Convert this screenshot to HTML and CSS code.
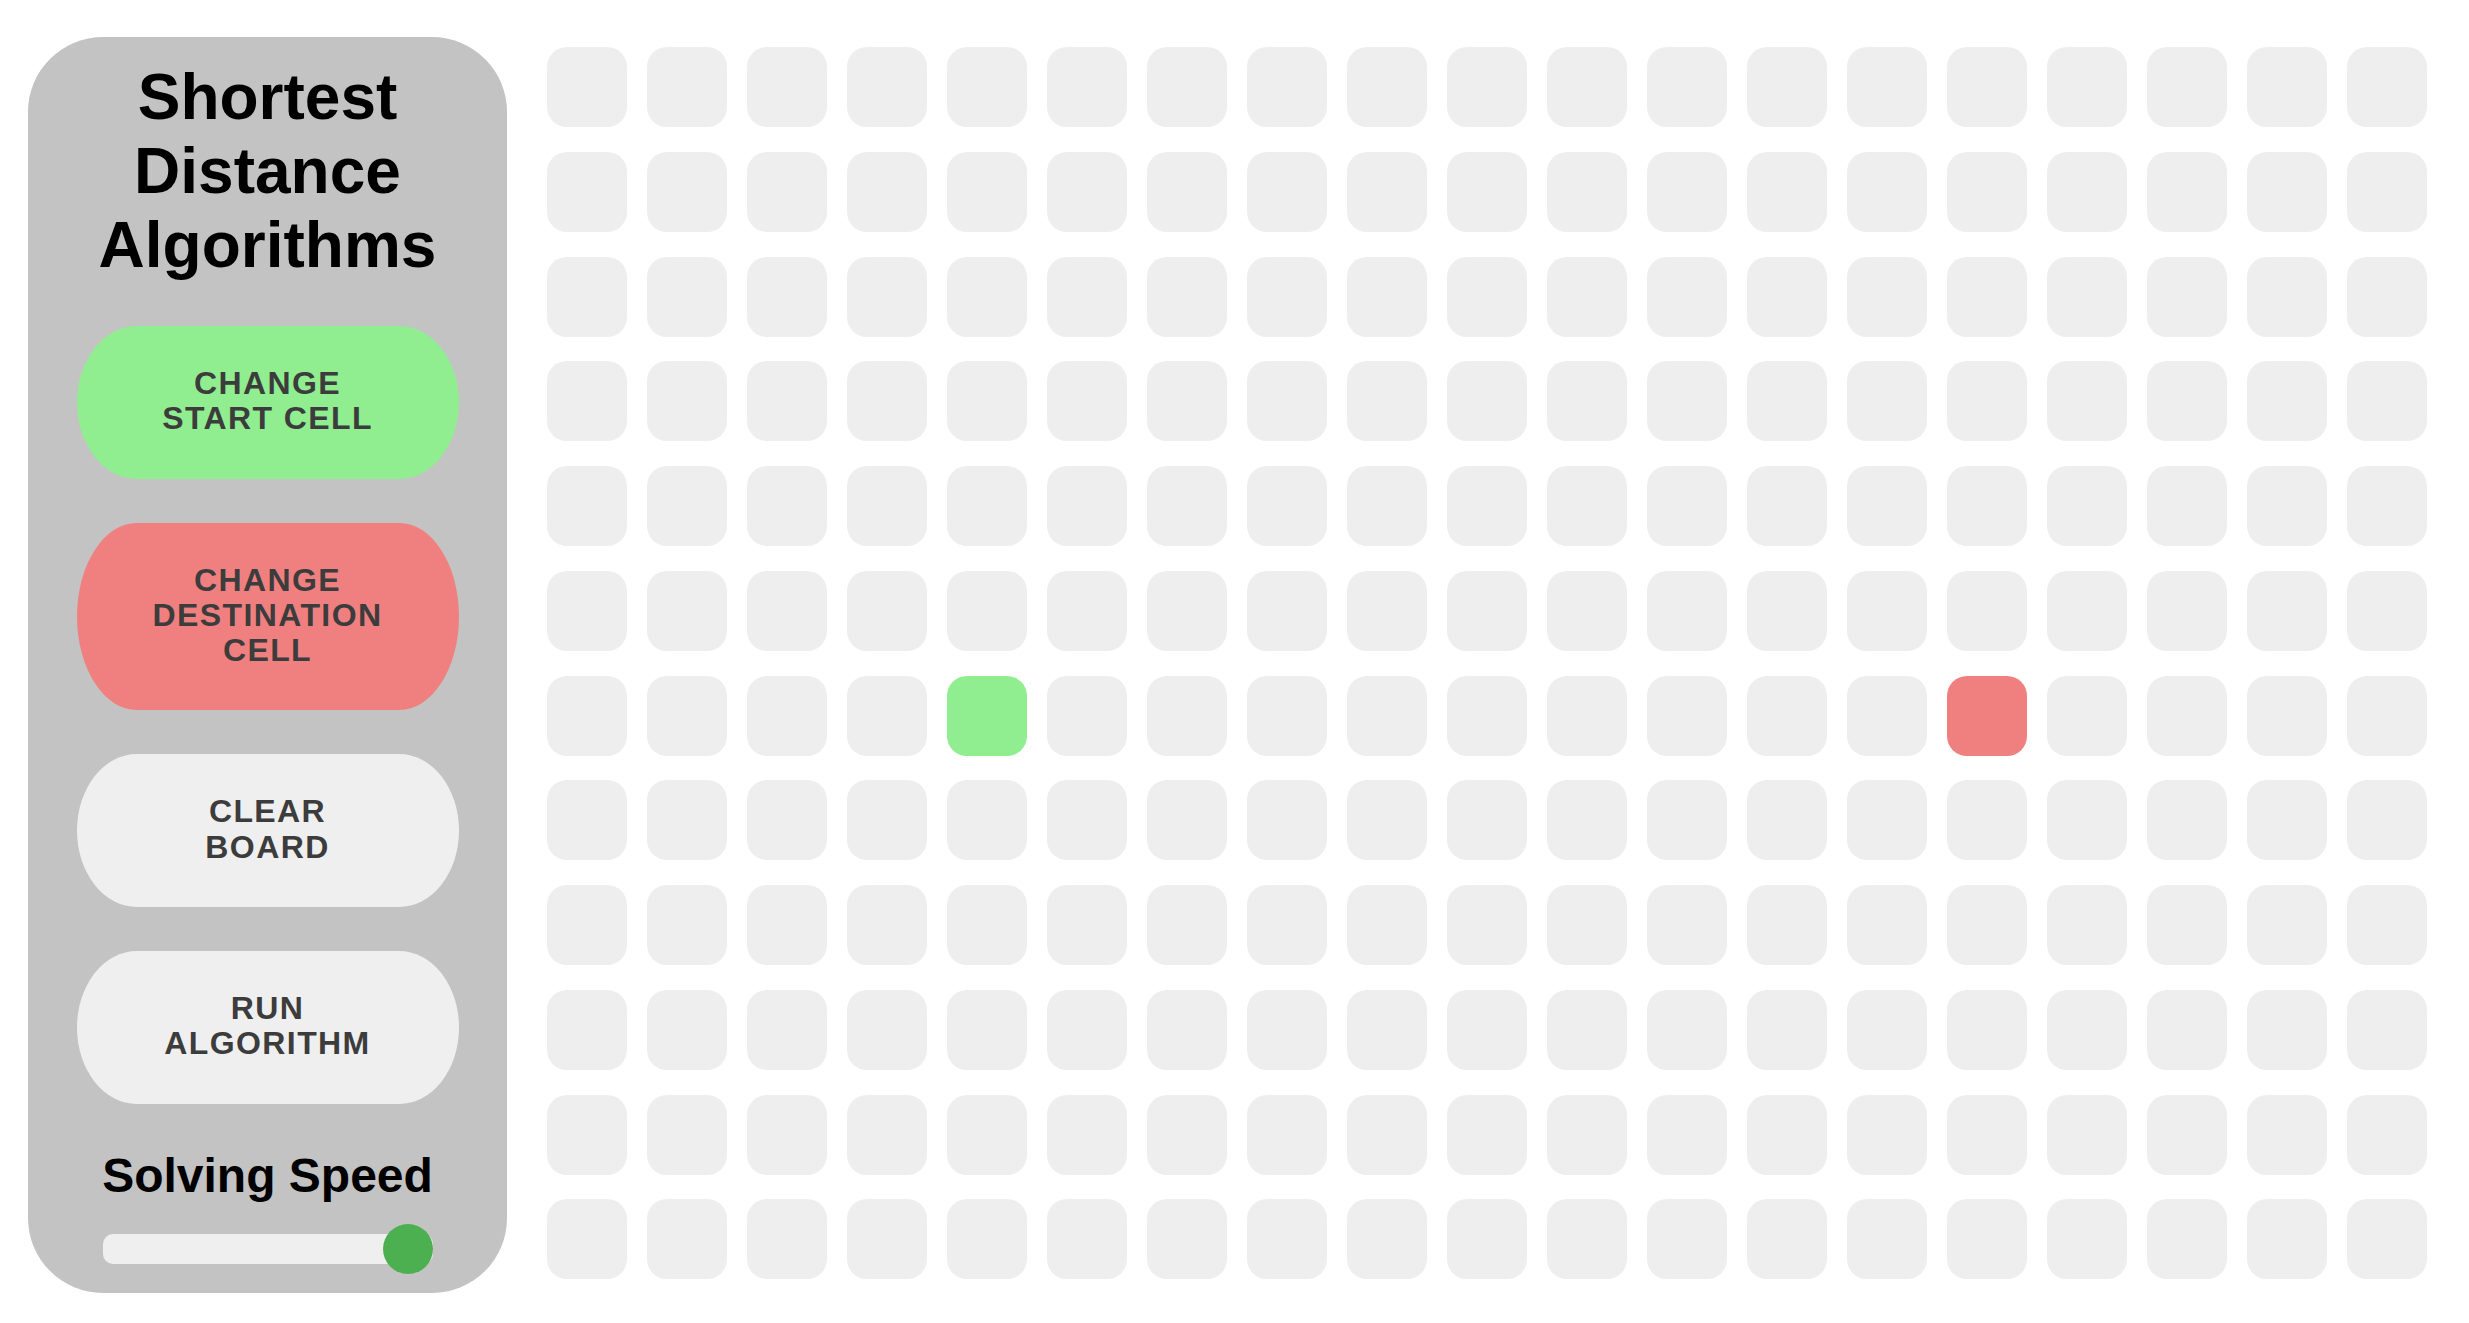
FILE: index.html
```html
<!DOCTYPE html>
<html lang="en">
<head>
    <meta charset="UTF-8">
    <meta name="viewport" content="width=device-width, initial-scale=1.0">
    <title>Shortest Distance Algorithms</title>
    <link rel="stylesheet" href="styles.css">
</head>
<body>
    <div class="app">
        <!-- Controls -->
        <aside class="sidebar">
            <h1 class="title">Shortest Distance Algorithms</h1>
            <button class="control start">Change start cell</button>
            <button class="control destination">Change destination cell</button>
            <button class="control">Clear board</button>
            <button class="control">Run algorithm</button>
            <h2 class="speed-label">Solving Speed</h2>
            <input type="range" class="speed-slider" id="speed" min="1" max="100" value="100">
        </aside>

        <!-- Board -->
        <div class="board" id="board"></div>
    </div>

    <script>
        const board = document.getElementById("board");
        const rows = 12;
        const cols = 19;
        const start = { row: 6, col: 4 };
        const destination = { row: 6, col: 14 };

        for (let r = 0; r < rows; r++) {
            for (let c = 0; c < cols; c++) {
                const cell = document.createElement("div");
                cell.className = "cell";
                if (r === start.row && c === start.col) cell.classList.add("cell-start");
                if (r === destination.row && c === destination.col) cell.classList.add("cell-destination");
                board.appendChild(cell);
            }
        }
    </script>
</body>
</html>
```

FILE: styles.css
```css
/* General Styling */
body {
    margin: 0;
    font-family: "Liberation Sans", Arial, Helvetica, sans-serif;
    background-color: #ffffff;
}
.app {
    display: flex;
    gap: 40px;
    height: 100vh;
    padding: 37px 42px 30px 28px;
    box-sizing: border-box;
}

/* Sidebar */
.sidebar {
    width: 479px;
    flex-shrink: 0;
    display: flex;
    flex-direction: column;
    align-items: center;
    padding: 23px 0 0;
    box-sizing: border-box;
    background-color: #c3c3c3;
    border-radius: 75px;
}
.title {
    margin: 0;
    font-size: 64px;
    font-weight: bold;
    line-height: normal;
    text-align: center;
    color: #000000;
}
.control {
    width: 382px;
    margin-top: 44px;
    padding: 40px 66px 42px;
    border: none;
    border-radius: 60px / 50%;
    background-color: #efefef;
    color: #3c3c3c;
    font-family: inherit;
    font-size: 32px;
    font-weight: bold;
    line-height: 35.3px;
    letter-spacing: 1.4px;
    text-transform: uppercase;
    cursor: pointer;
}
.control.start {
    background-color: #90ee90;
}
.control.destination {
    background-color: #f08080;
}
.speed-label {
    margin: 44px 0 0;
    font-size: 48px;
    font-weight: bold;
    line-height: normal;
    color: #000000;
}
.speed-slider {
    -webkit-appearance: none;
    appearance: none;
    width: 330px;
    height: 30px;
    margin: 31px 0 0;
    background: #efefef;
    border-radius: 10px;
    outline: none;
}
.speed-slider::-webkit-slider-thumb {
    -webkit-appearance: none;
    appearance: none;
    width: 50px;
    height: 50px;
    border-radius: 50%;
    background: #4caf50;
    cursor: pointer;
}

/* Board */
.board {
    align-self: flex-start;
    display: grid;
    grid-template-columns: repeat(19, 80px);
    grid-auto-rows: 80px;
    column-gap: 20px;
    row-gap: 24.75px;
    margin-top: 10px;
}
.cell {
    background-color: #eeeeee;
    border-radius: 20px;
}
.cell-start {
    background-color: #90ee90;
}
.cell-destination {
    background-color: #f08080;
}
```
